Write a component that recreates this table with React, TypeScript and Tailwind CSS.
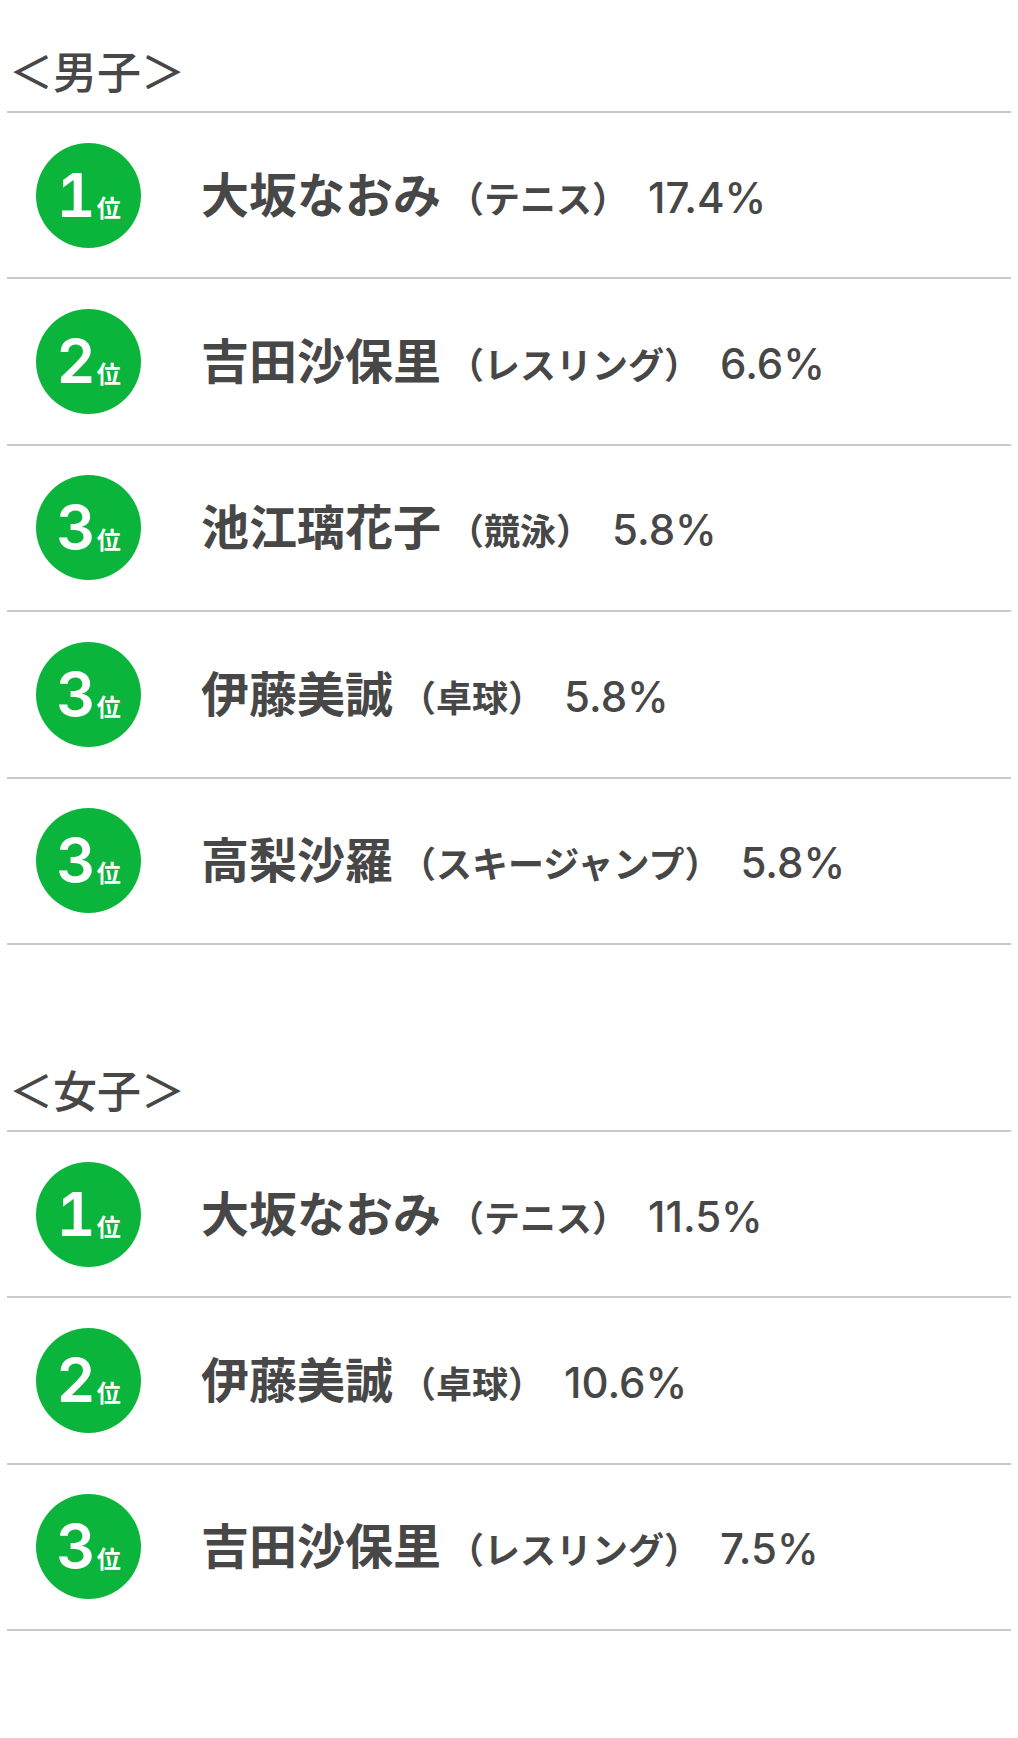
const MEN = [
  { rank: 1, name: '大坂なおみ', sport: '（テニス）', pct: '17.4%' },
  { rank: 2, name: '吉田沙保里', sport: '（レスリング）', pct: '6.6%' },
  { rank: 3, name: '池江璃花子', sport: '（競泳）', pct: '5.8%' },
  { rank: 3, name: '伊藤美誠', sport: '（卓球）', pct: '5.8%' },
  { rank: 3, name: '高梨沙羅', sport: '（スキージャンプ）', pct: '5.8%' },
];

const WOMEN = [
  { rank: 1, name: '大坂なおみ', sport: '（テニス）', pct: '11.5%' },
  { rank: 2, name: '伊藤美誠', sport: '（卓球）', pct: '10.6%' },
  { rank: 3, name: '吉田沙保里', sport: '（レスリング）', pct: '7.5%' },
];

type Item = { rank: number; name: string; sport: string; pct: string };

const JP = "font-['Noto_Sans_CJK_JP',sans-serif]";
const NUM = "font-['Inter','Liberation_Sans',sans-serif]";

function RankBadge({ rank }: { rank: number }) {
  return (
    <div className="w-[105px] h-[105px] shrink-0 rounded-full bg-[#0bb53c] flex items-center justify-center text-white">
      <div className="flex items-baseline">
        <span className={`${NUM} text-[61px] font-semibold leading-none tabular-nums`}>{rank}</span>
        <span className={`${JP} text-[24px] font-bold leading-none ml-[1px]`}>位</span>
      </div>
    </div>
  );
}

function Row({ item }: { item: Item }) {
  return (
    <div className="h-[166.4px] border-b-2 border-[#cacaca] flex items-center">
      <div className="ml-[29px]">
        <RankBadge rank={item.rank} />
      </div>
      <div className="ml-[60px] flex items-baseline text-[#474747] -mt-[4px]">
        <span className={`${JP} text-[48px] font-bold leading-none`}>{item.name}</span>
        <span className={`${JP} text-[36px] font-bold leading-none ml-[7px]`}>{item.sport}</span>
        <span className={`${NUM} text-[42px] font-medium leading-none ml-[20px]`}>{item.pct}</span>
      </div>
    </div>
  );
}

function Section({ title, items, className }: { title: string; items: Item[]; className?: string }) {
  return (
    <section className={className}>
      <div className="h-[113px] border-b-2 border-[#cacaca] pt-[48px] pl-[2px]">
        <h2 className={`${JP} text-[44px] leading-[44px] font-medium text-[#474747]`}>{title}</h2>
      </div>
      {items.map((item, i) => (
        <Row key={i} item={item} />
      ))}
    </section>
  );
}

export default function App() {
  return (
    <div className="w-[1018px] min-h-[1738px] bg-white px-[7px]">
      <Section title="＜男子＞" items={MEN} />
      <Section title="＜女子＞" items={WOMEN} className="mt-[74px]" />
    </div>
  );
}
